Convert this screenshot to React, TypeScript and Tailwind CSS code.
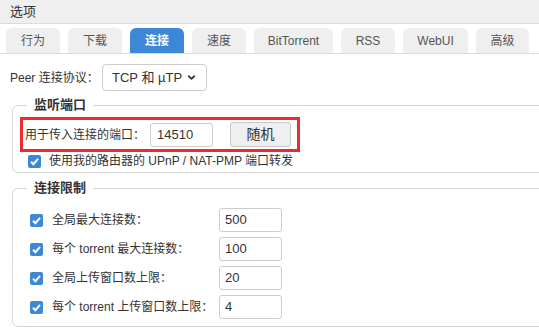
import { ChevronDown } from "lucide-react"

const tabs = [
    { label: "行为", w: "w-[54px]" },
    { label: "下载", w: "w-[54px]" },
    { label: "连接", w: "w-[54px]", active: true },
    { label: "速度", w: "w-[54px]" },
    { label: "BitTorrent", w: "w-[79px]" },
    { label: "RSS", w: "w-[54px]" },
    { label: "WebUI", w: "w-[65px]" },
    { label: "高级", w: "w-[53px]" },
]

const limits = [
    { label: "全局最大连接数：", value: "500" },
    { label: "每个 torrent 最大连接数：", value: "100" },
    { label: "全局上传窗口数上限：", value: "20" },
    { label: "每个 torrent 上传窗口数上限：", value: "4" },
]

function CheckBox() {
    return (
        <div className="w-[13px] h-[13px] shrink-0 rounded-[2px] bg-[#3d87d7] flex items-center justify-center">
            <svg width="11" height="11" viewBox="0 0 11 11">
                <path d="M2 5.8 L4.4 8.2 L9 2.8" fill="none" stroke="white" strokeWidth="2" />
            </svg>
        </div>
    )
}

export default function App() {
    return (
        <div className="w-[539px] h-[333px] overflow-hidden bg-white text-[#333] font-['Liberation_Sans','Noto_Sans_CJK_SC',sans-serif]">
            {/* 标题栏 */}
            <div className="h-[24px] bg-[#efefef] border-b border-[#dcdcdc] px-[10px] flex items-center text-[13px] leading-none">
                选项
            </div>

            {/* 标签页 */}
            <div className="pt-[4px] pl-[6px] flex gap-[8px] border-b border-[#dcdcdc]">
                {tabs.map(tab => (
                    <div
                        key={tab.label}
                        className={`${tab.w} h-[25px] rounded-t-[6px] flex items-center justify-center text-[12px] leading-none ${tab.active ? "bg-[#3d87d7] text-white font-bold" : "bg-[#efefef] text-[#555]"}`}
                    >
                        {tab.label}
                    </div>
                ))}
            </div>

            {/* 协议 */}
            <div className="mt-[10px] pl-[10px] flex items-center text-[12px]">
                <span className="w-[92px]">Peer 连接协议：</span>
                <div className="w-[105px] h-[27px] border border-[#ccc] rounded-[4px] flex items-center pl-[9px] pr-[9px] text-[13px]">
                    <span className="flex-1">TCP 和 µTP</span>
                    <ChevronDown size={11} strokeWidth={4} className="text-[#333]" />
                </div>
            </div>

            {/* 监听端口 */}
            <fieldset className="mt-[5px] ml-[12px] w-[600px] border border-[#d6d6d6] rounded-[6px] px-[7px] pb-[3px]">
                <legend className="ml-[7px] px-[7px] text-[13px] leading-[18px] font-bold">监听端口</legend>
                <div className="mt-[3px] w-[280px] h-[35px] border-[3px] border-[#ec2a2f] flex items-center pl-[2px] text-[12px]">
                    <span className="w-[125px]">用于传入连接的端口：</span>
                    <div className="w-[63px] h-[24px] border border-[#ccc] rounded-[3px] flex items-center px-[6px] text-[13px]">14510</div>
                    <div className="ml-[17px] w-[61px] h-[25px] border border-[#c8c8c8] rounded-[3px] bg-[#efefef] flex items-center justify-center text-[14px]">随机</div>
                </div>
                <div className="mt-[1px] h-[16px] pl-[8px] flex items-center gap-[8px] text-[12px]">
                    <CheckBox />
                    <span>使用我的路由器的 UPnP / NAT-PMP 端口转发</span>
                </div>
            </fieldset>

            {/* 连接限制 */}
            <fieldset className="mt-[6px] ml-[12px] w-[600px] border border-[#d6d6d6] rounded-[6px] pl-[17px] pb-[7px]">
                <legend className="ml-[-3px] px-[7px] text-[13px] leading-[18px] font-bold">连接限制</legend>
                <div className="mt-[11px] flex flex-col gap-[5px]">
                    {limits.map(item => (
                        <div key={item.label} className="flex items-center text-[12px]">
                            <div className="w-[189px] flex items-center gap-[9px]">
                                <CheckBox />
                                <span>{item.label}</span>
                            </div>
                            <div className="w-[63px] h-[24px] border border-[#ccc] rounded-[3px] flex items-center px-[5px] text-[13px]">{item.value}</div>
                        </div>
                    ))}
                </div>
            </fieldset>
        </div>
    )
}
